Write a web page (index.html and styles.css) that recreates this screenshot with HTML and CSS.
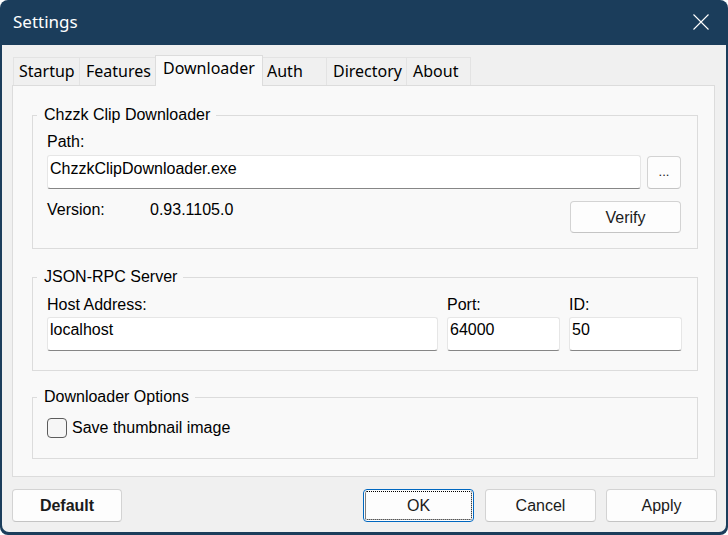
FILE: index.html
```html
<!DOCTYPE html>
<html>
<head>
<meta charset="utf-8">
<link rel="stylesheet" href="styles.css">
</head>
<body>
<div class="window">
  <div class="titlebar">
    <span class="title">Settings</span>
    <svg class="close" width="16" height="16" viewBox="0 0 16 16"><path d="M0.5 0.5 L15.5 15.5 M15.5 0.5 L0.5 15.5" stroke="#ffffff" stroke-width="1.1" fill="none"/></svg>
  </div>
  <div class="client">
    <div class="tabs">
      <div class="tab t-startup">Startup</div>
      <div class="tab t-features">Features</div>
      <div class="tab t-downloader selected">Downloader</div>
      <div class="tab t-auth">Auth</div>
      <div class="tab t-directory">Directory</div>
      <div class="tab t-about">About</div>
    </div>
    <div class="panel">
      <fieldset class="group g-clip">
        <legend>Chzzk Clip Downloader</legend>
        <div class="group-body body-clip">
          <div class="label">Path:</div>
          <div class="path-row">
            <div class="textbox tb-path">ChzzkClipDownloader.exe</div>
            <div class="btn btn-browse">...</div>
          </div>
          <div class="version-row">
            <span class="label version-label">Version:</span>
            <span class="label">0.93.1105.0</span>
            <div class="btn btn-verify">Verify</div>
          </div>
        </div>
      </fieldset>
      <fieldset class="group g-rpc">
        <legend>JSON-RPC Server</legend>
        <div class="group-body body-rpc">
          <div class="rpc-grid">
            <div class="label">Host Address:</div>
            <div class="label">Port:</div>
            <div class="label">ID:</div>
            <div class="textbox">localhost</div>
            <div class="textbox">64000</div>
            <div class="textbox">50</div>
          </div>
        </div>
      </fieldset>
      <fieldset class="group g-opts">
        <legend>Downloader Options</legend>
        <div class="group-body body-opts">
          <div class="check-row">
            <div class="checkbox"></div>
            <span class="label">Save thumbnail image</span>
          </div>
        </div>
      </fieldset>
    </div>
    <div class="footer">
      <div class="btn btn-footer btn-default">Default</div>
      <div class="spacer"></div>
      <div class="btn btn-footer btn-ok">OK</div>
      <div class="btn btn-footer btn-cancel">Cancel</div>
      <div class="btn btn-footer btn-apply">Apply</div>
    </div>
  </div>
</div>
</body>
</html>
```
FILE: styles.css
```css
html, body {
  margin: 0;
  padding: 0;
  background: #ffffff;
}
body {
  width: 728px;
  height: 535px;
  overflow: hidden;
  font-family: "Liberation Sans", Arial, sans-serif;
  font-size: 16px;
  color: #000;
}
.window {
  width: 728px;
  height: 535px;
  box-sizing: border-box;
  background: #1b3d5b;
  border-radius: 8px;
  display: flex;
  flex-direction: column;
  overflow: hidden;
}
.titlebar {
  height: 45px;
  flex: none;
  display: flex;
  align-items: center;
  justify-content: space-between;
  padding: 0 19px 1px 13px;
  box-sizing: border-box;
}
.title {
  font-family: "Noto Sans", sans-serif;
  font-size: 17px;
  line-height: 20px;
  color: #ffffff;
}
.close {
  display: block;
}
.client {
  flex: 1;
  margin: 0 2px 3px 2px;
  background: #f0f0f0;
  border-radius: 0 0 7px 7px;
  display: flex;
  flex-direction: column;
}
.tabs {
  height: 40px;
  flex: none;
  display: flex;
  align-items: flex-end;
  padding-left: 11px;
  position: relative;
  z-index: 2;
}
.tab {
  height: 28px;
  box-sizing: border-box;
  border: 1px solid #e3e3e3;
  border-bottom: none;
  background: #f0f0f0;
  font-family: "Noto Sans", sans-serif;
  font-size: 16px;
  line-height: 20px;
  padding: 3px 0 0 5px;
  margin-left: -1px;
  white-space: nowrap;
  color: #000;
}
.tab:first-child { margin-left: 0; }
.t-startup { width: 67px; }
.t-features { width: 77px; padding-left: 6px; }
.t-downloader { width: 108px; padding-left: 7px; }
.t-auth { width: 65px; padding-left: 4px; }
.t-directory { width: 81px; padding-left: 6px; }
.t-about { width: 65px; padding-left: 6px; }
.tab.selected {
  height: 31px;
  margin-bottom: -1px;
  background: #f9f9f9;
  border-color: #dcdcdc;
  padding-top: 2px;
  position: relative;
  z-index: 3;
}
.panel {
  flex: none;
  height: 392px;
  box-sizing: border-box;
  margin: 0 11px 0 10px;
  background: #f9f9f9;
  border: 1px solid #dcdcdc;
  padding: 20px 16px 0 19px;
  position: relative;
  z-index: 1;
}
.group {
  margin: 0;
  padding: 0;
  border: 1px solid #dcdcdc;
  min-width: 0;
}
.group legend {
  margin-left: 4px;
  padding: 0 6px 0 7px;
  line-height: 18px;
  font-size: 16px;
}
.g-rpc { margin-top: 19px; }
.g-opts { margin-top: 17px; }
.group-body {
  padding: 9px 15px 15px 14px;
}
.body-rpc { padding-top: 10px; padding-bottom: 19px; }
.body-opts { padding-top: 12px; padding-bottom: 20px; }
.label {
  line-height: 18px;
  white-space: nowrap;
}
.path-row {
  display: flex;
  align-items: flex-start;
  gap: 6px;
  margin-top: 4px;
}
.textbox {
  box-sizing: border-box;
  height: 34px;
  background: #ffffff;
  border: 1px solid #e6e6e6;
  border-bottom-color: #868686;
  border-radius: 3px;
  padding: 3px 2px 0 2px;
  line-height: 18px;
  white-space: nowrap;
  overflow: hidden;
}
.tb-path {
  flex: 1;
  padding-top: 4px;
}
.btn {
  box-sizing: border-box;
  background: #fdfdfd;
  border: 1px solid #d3d3d3;
  border-bottom-color: #c4c4c4;
  border-radius: 4px;
  display: flex;
  align-items: center;
  justify-content: center;
  line-height: 18px;
  color: #1b1b1b;
}
.btn-browse {
  width: 34px;
  height: 33px;
  margin-top: 1px;
  margin-right: 1px;
  font-size: 13px;
  padding-bottom: 2px;
}
.version-row {
  display: flex;
  align-items: flex-start;
  margin-top: 12px;
}
.version-label {
  width: 103px;
}
.btn-verify {
  margin-left: auto;
  width: 111px;
  height: 32px;
  margin-right: 1px;
  padding-top: 1px;
}
.rpc-grid {
  display: grid;
  grid-template-columns: 391px 113px 113px;
  column-gap: 9px;
  row-gap: 3px;
}
.check-row {
  display: flex;
  align-items: center;
  gap: 5px;
}
.checkbox {
  width: 20px;
  height: 20px;
  box-sizing: border-box;
  border: 1px solid #5c5c5c;
  border-radius: 4px;
  background: #f6f6f6;
}
.footer {
  flex: 1;
  display: flex;
  align-items: flex-start;
  padding: 12px 9px 0 10px;
}
.spacer { flex: 1; }
.btn-footer {
  width: 111px;
  height: 33px;
}
.btn-default {
  width: 110px;
  font-weight: bold;
}
.btn-ok {
  border-color: #0067c0;
  outline: 1px dotted #000;
  outline-offset: -3px;
}
.btn-cancel { margin-left: 11px; }
.btn-apply { margin-left: 10px; }
```
